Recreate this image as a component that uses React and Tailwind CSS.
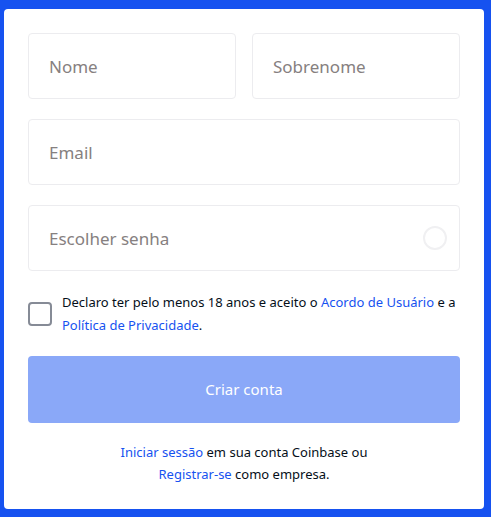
import React from "react";

const font = { fontFamily: '"Noto Sans", "Open Sans", sans-serif' };

const Field = ({ placeholder, children }) => (
  <div className="relative flex h-[66px] items-center rounded border border-[#ececef] bg-white">
    <input
      placeholder={placeholder}
      className="h-full w-full bg-transparent pl-5 pr-4 text-[17px] text-[#333] outline-none placeholder:text-[#868080]"
    />
    {children}
  </div>
);

export default function App() {
  return (
    <div className="min-h-[517px] bg-[#1652f0] pt-[9px] pl-1 pr-[7px] pb-[9px]" style={font}>
      <div className="rounded bg-white p-6">
        <div className="flex flex-col gap-5">
          <div className="grid grid-cols-2 gap-4">
            <Field placeholder="Nome" />
            <Field placeholder="Sobrenome" />
          </div>
          <Field placeholder="Email" />
          <Field placeholder="Escolher senha">
            <span className="absolute right-[12px] h-[24px] w-[24px] rounded-full border-2 border-[#f0f0f2]" />
          </Field>
        </div>

        <label className="mt-5 flex items-center gap-[10px]">
          <span className="h-[24px] w-[24px] shrink-0 rounded border-2 border-[#868b96]" />
          <span className="text-[13px] leading-[23px] text-[#050f19]">
            Declaro ter pelo menos 18 anos e aceito o{" "}
            <a className="text-[#1652f0]">Acordo de Usuário</a> e a{" "}
            <a className="text-[#1652f0]">Política de Privacidade</a>.
          </span>
        </label>

        <button className="mt-[19px] h-[67px] w-full rounded bg-[#8aa8f8] text-[15px] text-white">
          Criar conta
        </button>

        <p className="mt-[18px] text-center text-[13px] leading-[22px] text-[#050f19]">
          <a className="text-[#1652f0]">Iniciar sessão</a> em sua conta Coinbase ou
          <br />
          <a className="text-[#1652f0]">Registrar-se</a> como empresa.
        </p>
      </div>
    </div>
  );
}
